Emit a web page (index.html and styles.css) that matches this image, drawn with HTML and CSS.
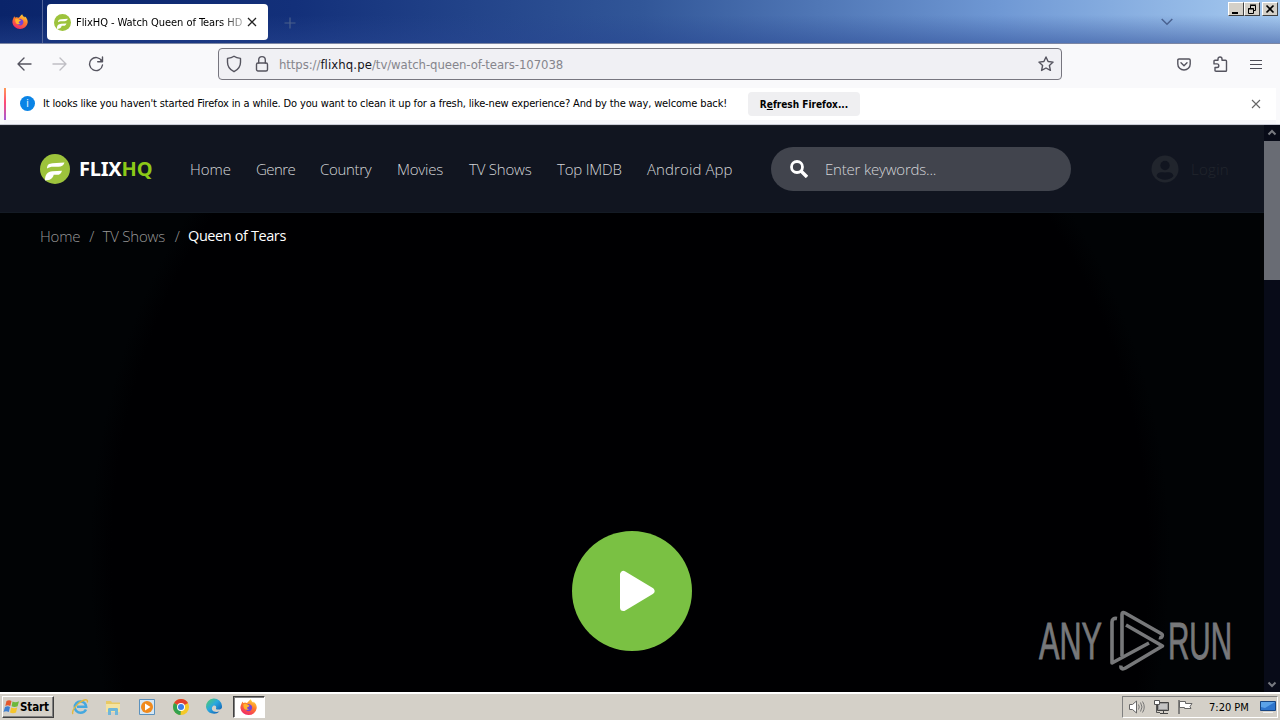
FILE: index.html
```html
<!DOCTYPE html>
<html lang="en">
<head>
<meta charset="utf-8">
<title>FlixHQ - Watch Queen of Tears HD</title>
<link rel="stylesheet" href="styles.css">
</head>
<body>
<svg width="0" height="0" class="defs">
  <defs>
    <linearGradient id="fire" x1="0.8" y1="0" x2="0.3" y2="1"><stop offset="0" stop-color="#ffe03a"/><stop offset=".45" stop-color="#ff7a2a"/><stop offset="1" stop-color="#f0266a"/></linearGradient>
    <linearGradient id="edgeg" x1="0" y1="0" x2="1" y2="1"><stop offset="0" stop-color="#56d05a"/><stop offset=".45" stop-color="#2aa8e0"/><stop offset="1" stop-color="#0b4fa8"/></linearGradient>
    <symbol id="firefox" viewBox="0 0 16 16">
      <path fill="url(#fire)" d="M10.2.3c.3 1.6 1.4 2.2 2.3 3.2.3-.4.2-.8.1-1.2C14.900 4 16 6.200 15.700 8.800A7.700 7.200 0 0 1 .4 8.500C.3 6.200 1.300 4.600 2.300 2.300l.8 1.500C4.500 2.900 5.500 3.300 6.500 3.800 7.800 3.400 8.300 1.300 10.200.3z"/>
      <path fill="#7343d8" d="M8 4.800c2.200.2 3.500 1.700 3.400 3.500S10 11.500 8.200 11.500 4.900 10.200 4.800 8.400c0-.5.1-1 .3-1.400l2.300.3C8.800 6.500 7.500 5.900 7 5.600c.2-.4.600-.7 1-.8z"/>
      <path fill="#ffb52c" d="M3.200 5.200c1.700-.8 3.200-.3 3.800.5 1.200.1 2 .3 1.800.8-.4.700-1.700.6-2 1.400-.3 1 .6 1.700 1.900 1.700-2 1.300-4.700.5-5.200-1.700-.2-1-.5-1.800-.3-2.700z"/>
    </symbol>
    <symbol id="flix" viewBox="0 0 30 30">
      <circle cx="15" cy="15" r="15" fill="#9dc33c"/>
      <path fill="#fff" d="M7 14.500C7 11 9 9.500 12.500 9.300L24.500 8.500C23.500 11.500 21.500 12.700 18.500 12.700h-5c-3 0-4.500.600-6.500 1.800zM5 26.500c0-6 2.500-9 7.500-9.200l9.500-.600c-1 3-2.500 4.100-5 4.100h-3.300c-1 4-3.700 5.700-8.700 5.700z"/>
    </symbol>
  </defs>
</svg>
<div class="screen">
  <header class="titlebar">
    <div class="ff-button"><svg width="16" height="16"><use href="#firefox"/></svg></div>
    <div class="tab">
      <svg width="17" height="17" viewBox="0 0 30 30"><use href="#flix"/></svg>
      <span class="tab-title">FlixHQ - Watch Queen of Tears HD</span>
      <svg class="tab-close" width="10" height="10" viewBox="0 0 10 10"><path d="M1 1l8 8M9 1L1 9" stroke="#222" stroke-width="1.3"/></svg>
    </div>
    <svg class="new-tab" width="12" height="12" viewBox="0 0 12 12"><path d="M6 .5v11M.5 6h11" stroke="#4a608c" stroke-width="1.2"/></svg>
    <svg class="all-tabs" width="12" height="8" viewBox="0 0 12 8"><path d="M.7 1L6 6.300 11.300 1" fill="none" stroke="#4a6290" stroke-width="1.500"/></svg>
    <div class="window-buttons">
      <span class="wb"><svg width="14" height="12"><path d="M3 9h6v2H3z"/></svg></span>
      <span class="wb"><svg width="14" height="12" fill="none" stroke="#000"><path d="M5.500 5V2.500h5v5H9M5 2h6M3.500 5.500h5v5h-5zM3 6h6"/></svg></span>
      <span class="wb wb-close"><svg width="14" height="12"><path d="M3.500 2.500l7 7M10.500 2.500l-7 7" stroke="#000" stroke-width="1.700"/></svg></span>
    </div>
  </header>

  <div class="toolbar">
    <svg class="nav-back" width="16" height="16" viewBox="0 0 16 16"><path d="M15 8H2M8 2L2 8l6 6" class="ln"/></svg>
    <svg class="nav-fwd" width="16" height="16" viewBox="0 0 16 16"><path d="M1 8h13M8 2l6 6-6 6" class="ln"/></svg>
    <svg class="nav-reload" width="16" height="16" viewBox="0 0 16 16"><path d="M13.800 5A6.500 6.500 0 1 0 14.500 9M14.500 1v4.800H9.700" class="ln"/><path d="M14.800 2v4h-4z" fill="#55545f"/></svg>
    <div class="urlbar">
      <svg class="u-shield" width="16" height="18" viewBox="0 0 16 18"><path class="ln" d="M8 1.300c2 1.500 4.300 1.900 6.500 2.100v3.800c0 4-2.500 7.500-6.500 9.500-4-2-6.500-5.500-6.500-9.500V3.400C3.700 3.200 6 2.800 8 1.300z"/></svg>
      <svg class="u-lock" width="14" height="18" viewBox="0 0 14 18"><rect class="ln" x="1.500" y="8" width="11" height="8" rx="1.500"/><path class="ln" d="M3.700 8V5c0-4.500 6.600-4.500 6.600 0v3"/></svg>
      <span class="url">https://<b>flixhq.pe</b>/tv/watch-queen-of-tears-107038</span>
      <svg class="u-star" width="16" height="16" viewBox="0 0 16 16"><path class="ln" d="M8 1l2.100 4.500 5 .6-3.700 3.400 1 4.900L8 12l-4.400 2.400 1-4.900L.9 6.100l5-.6z"/></svg>
    </div>
    <svg class="t-pocket" width="14" height="13" viewBox="0 0 14 13"><path class="ln" d="M2 1h10c.700 0 1.200.500 1.200 1.200V6c0 3.500-2.800 6-6.200 6S.8 9.500.8 6V2.200C.8 1.500 1.300 1 2 1zM4 4.800l3 3 3-3"/></svg>
    <svg class="t-ext" width="15" height="16" viewBox="0 0 15 16"><path class="ln" d="M5 4.300V3a2 2 0 0 1 4 0v1.300h3.600c.6 0 .9.300.9.900v9.300c0 .5-.3.800-.8.800H3c-.6 0-1-.3-1-.9V11.500h2a1.800 1.800 0 0 0 0-3.600H1V5.200c0-.6.300-.9.900-.9z"/></svg>
    <svg class="t-menu" width="12" height="11" viewBox="0 0 12 11"><path d="M0 1.500h12M0 5.500h12M0 9.500h12" stroke="#4d4d57" stroke-width="1.200"/></svg>
  </div>

  <div class="notice">
    <span class="info">i</span>
    <span class="notice-text">It looks like you haven't started Firefox in a while. Do you want to clean it up for a fresh, like-new experience? And by the way, welcome back!</span>
    <span class="refresh">R<u>e</u>fresh Firefox...</span>
    <svg class="notice-close" width="10" height="10" viewBox="0 0 10 10"><path d="M1 1l8 8M9 1L1 9" stroke="#666" stroke-width="1.100"/></svg>
  </div>

  <main class="viewport">
    <div class="page">
      <div class="site-header">
        <svg class="logo" width="30" height="30" viewBox="0 0 30 30"><use href="#flix"/></svg>
        <span class="brand">FLIX<em>HQ</em></span>
        <nav class="menu">
          <a class="m1">Home</a><a class="m2">Genre</a><a class="m3">Country</a><a class="m4">Movies</a><a class="m5">TV Shows</a><a class="m6">Top IMDB</a><a class="m7">Android App</a>
        </nav>
        <div class="search">
          <svg width="18" height="18" viewBox="0 0 18 18" fill="none" stroke="#fff"><circle cx="7" cy="7" r="5.500" stroke-width="2.800"/><path d="M11 11l6 6" stroke-width="3.400"/></svg>
          <span>Enter keywords...</span>
        </div>
        <div class="login">
          <svg width="28" height="28" viewBox="0 0 28 28"><circle cx="14" cy="14" r="13.500" fill="#21252d"/><circle cx="14" cy="10.500" r="4.700" fill="#111520"/><path d="M5.500 21c1.500-5 5-3.500 8.500-3.500s7-1.500 8.500 3.500c-4 5-13 5-17 0z" fill="#111520"/></svg>
          <span>Login</span>
        </div>
      </div>
      <div class="hero">
        <div class="crumbs"><span class="c1">Home</span><span class="sep">/</span><span class="c2">TV Shows</span><span class="sep">/</span><span class="c3">Queen of Tears</span></div>
        <div class="play"><svg width="38" height="42" viewBox="0 0 38 42"><path d="M4.500 4.500v33L32 21z" fill="#fff" stroke="#fff" stroke-width="7" stroke-linejoin="round"/></svg></div>
      </div>
    </div>
    <div class="scrollbar">
      <svg width="16" height="16"><path d="M4.500 9.500L8 6l3.500 3.500" fill="none" stroke="#777a80" stroke-width="2"/></svg>
      <div class="thumb"></div>
      <svg class="down" width="16" height="16"><path d="M4.500 6.500L8 10l3.500-3.500" fill="none" stroke="#777a80" stroke-width="2"/></svg>
    </div>
    <div class="watermark">
      <svg width="226" height="64" viewBox="0 0 226 64">
        <g class="wm-text"><text transform="translate(2 49.500) scale(.6 1)">ANY</text><text transform="translate(131 49.500) scale(.58 1)">RUN</text></g>
        <g fill="none" stroke="#77787a" stroke-width="3.600" stroke-linejoin="round">
          <path d="M80 9.500c-3-.5-5 .5-5 3.500v41l37-20"/>
          <path d="M85 47V5.500c0-2 1-2.500 3-1.500l36 20.500c2.500 1.500 1 5-2 4"/>
          <path d="M89 16l36.500 21-37 22c-3 1.700-5 1-4.500-2.500"/>
        </g>
      </svg>
    </div>
  </main>

  <footer class="taskbar">
    <div class="start">
      <svg width="17" height="16" viewBox="0 0 17 16"><path fill="#e4572b" d="M3.500 2C5.500.8 7 1 8.500 2L7.300 7C5.500 6 4 6 2.300 7z"/><path fill="#6db83c" d="M9.500 2.500c2 1 4 1 6.500-.3L14.600 7.200c-2 1-4 1-6 .1z"/><path fill="#3f7fd0" d="M2 8c2-1 3.500-1 5 0l-1.200 5c-2-1-3.500-1-5.300 0z"/><path fill="#f5c52d" d="M8.200 8.500c2 1 4 1 6 0L13 13.500c-2 1-4 1-6 0z"/></svg>
      <span>Start</span>
    </div>
    <div class="quick">
      <svg width="18" height="18" viewBox="0 0 18 18"><path d="M15 11.500c-1 2-3 3.300-5.500 3.300a5.700 5.700 0 1 1 5.700-6H6" fill="none" stroke="#45a8df" stroke-width="2.500"/><path d="M2 16C0 13 6 5 12 2.500c4-1.600 5-.3 4.200 2" fill="none" stroke="#e3b93f" stroke-width="1.400"/></svg>
      <svg width="18" height="18" viewBox="0 0 18 18"><path d="M2 3h5l1 1.500h8V14H2z" fill="#e8c965"/><path d="M2 6h14v8H2z" fill="#f4e3a0"/><path d="M4 17V11.500c0-1 .5-1.500 1.500-1.500h7c1 0 1.500.5 1.500 1.500V17h-3v-4H7v4z" fill="#6fb7d9"/></svg>
      <svg width="18" height="18" viewBox="0 0 18 18"><path d="M1.500 1.500h15v15h-15z" fill="#d5e7f5" stroke="#5b91bd"/><circle cx="9" cy="9" r="6" fill="#f08a1d"/><path d="M7 5.500v7L12.500 9z" fill="#fff"/></svg>
      <svg width="18" height="18" viewBox="0 0 18 18"><circle cx="9" cy="9" r="8" fill="#f5c928"/><path d="M9 9L2.100 5A8 8 0 0 1 16 5z" fill="#e2402f"/><path d="M9 9L2.100 5A8 8 0 0 0 8.500 17z" fill="#33a14f"/><circle cx="9" cy="9" r="4" fill="#fff"/><circle cx="9" cy="9" r="3" fill="#3c7fe8"/></svg>
      <svg width="18" height="18" viewBox="0 0 18 18"><path d="M1 9a8 8 0 0 1 16-1c.5 3-2 4-5 3.500-1.500-.3-1-1-.8-2C11.500 7 8 6.500 7 9.500c-.8 3 2 5.500 7.500 4A8 8 0 0 1 1 9z" fill="url(#edgeg)"/></svg>
      <div class="active-task"><svg width="17" height="17" viewBox="0 0 16 16"><use href="#firefox"/></svg></div>
    </div>
    <div class="tray">
      <svg width="18" height="16" viewBox="0 0 18 16"><path d="M1.500 5.500h3L8.500 2v12l-4-3.500h-3z" fill="#fff" stroke="#666"/><path d="M10.500 5.500q1.500 2.500 0 5M12.500 3.500q3 4.500 0 9M14.500 2.500q3.500 5.500 0 11" fill="none" stroke="#777"/></svg>
      <svg width="17" height="16" viewBox="0 0 17 16"><path d="M4.500 3.500h11v8h-11z" fill="#999" stroke="#444"/><path d="M6 5h8v5H6z" fill="#c4c4c4"/><path d="M7 14.500h8M10.500 12v2" stroke="#444"/><path d="M1.500 1.500h5v4h-5z" fill="#fff" stroke="#555"/><path d="M3.500 6v7.500H7" fill="none" stroke="#555"/></svg>
      <svg width="17" height="16" viewBox="0 0 17 16"><path d="M2.500 2.500h6v2h6.500l-2 3 1 2H7.500v-1h-5z" fill="#fff" stroke="#666"/><path d="M2 1v14" stroke="#666" stroke-width="1.500"/></svg>
      <span class="clock">7:20 PM</span>
      <svg class="desk" width="16" height="14" viewBox="0 0 16 14"><path d="M.5 1.500h15v9H.5z" fill="#2f75cc" stroke="#174582"/><path d="M1 2h14L5 8 1 7z" fill="#5ba2e8"/><path d="M3 12.500h10" stroke="#f0f0f0"/></svg>
    </div>
  </footer>
</div>
</body>
</html>
```
FILE: styles.css
```css
* { box-sizing: border-box; }
body { margin: 0; background: #000; overflow: hidden; }
svg { display: block; flex: none; }
.defs { position: absolute; }
.screen { width: 1280px; height: 720px; display: flex; flex-direction: column; font-family: "DejaVu Sans Condensed", "DejaVu Sans", sans-serif; font-stretch: condensed; font-size: 11px; white-space: nowrap; }
.ln { fill: none; stroke: #55545f; stroke-width: 1.4; stroke-linejoin: round; stroke-linecap: round; }

.titlebar { height: 44px; flex: none; display: flex; align-items: flex-start; border-bottom: 1px solid #7c86a3; background: linear-gradient(180deg, rgba(30,60,130,0) 35%, rgba(40,70,145,.5) 100%), linear-gradient(90deg, #0a246a 0, #13307a 23%, #315698 50%, #6f98d4 78%, #a6caf0 100%); }
.ff-button { width: 43px; height: 43px; padding: 14px 0 0 12px; border-right: 1px solid #53659a; }
.tab { width: 221px; height: 36px; margin: 4px 0 0 4px; padding: 0 10px 0 7px; display: flex; align-items: center; background: #fff; border-radius: 4px; }
.tab-title { width: 166px; margin: 1px 0 0 5px; overflow: hidden; letter-spacing: -.06px; color: #000; -webkit-mask-image: linear-gradient(90deg, #000 145px, transparent 176px); }
.tab-close { margin-left: 5px; }
.new-tab { margin: 17px 0 0 16px; }
.all-tabs { margin: 18px 0 0 865px; }
.window-buttons { display: flex; margin: 2px 0 0 55px; }
.wb { width: 16px; height: 14px; background: #d4d0c8; border: 1px solid; border-color: #fff #404040 #404040 #fff; overflow: hidden; }
.wb-close { margin-left: 2px; }

.toolbar { height: 44px; flex: none; display: flex; align-items: center; background: #f9f9fb; padding: 0 18px 4px 16px; }
.nav-fwd { margin-left: 20px; opacity: .35; }
.nav-reload { margin-left: 20px; }
.urlbar { width: 844px; height: 32px; margin-left: 114px; display: flex; align-items: center; padding: 0 7px; border: 1px solid #77767f; border-radius: 4px; background: #f0f0f4; }
.u-lock { margin-left: 13px; }
.url { flex: 1; margin-left: 10px; font-size: 13px; letter-spacing: -.07px; color: #85858c; }
.url b { font-weight: 400; letter-spacing: .1px; color: #15141a; }
.t-pocket { margin-left: 115px; }
.t-ext { margin-left: 22px; }
.t-menu { margin-left: 22px; }

.notice { height: 37px; flex: none; display: flex; align-items: center; padding: 0 19px 5px 14px; border-bottom: 1px solid #c8cad6; background: linear-gradient(#ff9a56, #ff4a74 45%, #a35bd8) 4px 0 / 2px 32px no-repeat, linear-gradient(#f9f9fb,#f9f9fb) 0 0 / 4px 100% no-repeat, linear-gradient(#f9f9fb,#f9f9fb) 100% 0 / 4px 100% no-repeat, linear-gradient(#f4f4f8,#f6f6fa) 0 100% / 100% 4px no-repeat, #fff; }
.info { width: 15px; height: 15px; margin-left: 6px; border-radius: 50%; background: #0a84e6; color: #fff; text-align: center; font-size: 10px; line-height: 15px; }
.notice-text { width: 697px; margin-left: 8px; color: #000; letter-spacing: -.145px; }
.refresh { width: 112px; height: 24px; margin-left: 8px; border-radius: 4px; background: #efeff1; color: #000; font-weight: 700; font-size: 10px; line-height: 25px; text-align: center; }
.notice-close { margin-left: auto; }

.viewport { position: relative; flex: 1; min-height: 0; display: flex; }
.page { width: 1264px; display: flex; flex-direction: column; font-family: "Open Sans", "Noto Sans", sans-serif; font-stretch: normal; font-weight: 300; font-size: 15px; }
.site-header { height: 88px; flex: none; display: flex; align-items: center; padding-left: 40px; background: #111520; border-top: 1px solid #1c1f27; border-bottom: 1px solid #141b25; color: #d4d5d8; }
.brand { width: 111px; margin: -1px 0 0 9px; font-family: "Noto Sans", sans-serif; font-weight: 700; font-size: 20px; letter-spacing: -.2px; color: #fff; }
.brand em { font-style: normal; color: #8cc818; }
.menu { display: flex; gap: 25px; }
.m1 { width: 41px; } .m2 { width: 39px; } .m3 { width: 52px; } .m4 { width: 47px; } .m5 { width: 63px; } .m6 { width: 65px; } .m7 { width: 86px; }
.menu a, .crumbs, .search { letter-spacing: -.2px; }
.menu .m1 { letter-spacing: 0; }
.menu .m2 { letter-spacing: -.6px; }
.menu .m3 { letter-spacing: -.3px; }
.menu .m7 { letter-spacing: .1px; }
.search { width: 300px; height: 44px; margin-left: 38px; padding-left: 19px; display: flex; align-items: center; gap: 17px; border-radius: 22px; background: #41444d; }
.login { margin-left: 80px; display: flex; align-items: center; gap: 12px; letter-spacing: .3px; color: #21252d; }
.hero { flex: 1; display: flex; flex-direction: column; align-items: center; background: radial-gradient(ellipse 540px 600px at 630px 345px, #000002 96%, #010305 100%); }
.crumbs { align-self: stretch; display: flex; padding: 13px 0 0 40px; color: #999; }
.c1 { width: 41px; } .c2 { width: 64px; } .sep { width: 21.5px; text-align: center; } .c3 { color: #fff; font-weight: 400; font-size: 14.5px; letter-spacing: -.4px; }
.play { width: 120px; height: 120px; margin-top: 285px; padding: 39px 0 0 47px; border-radius: 50%; background: #7ac143; }
.scrollbar { width: 16px; background: #080b18; display: flex; flex-direction: column; }
.thumb { height: 139px; background: #696c74; }
.down { margin-top: auto; }
.watermark { position: absolute; left: 1037px; top: 484px; }
.wm-text { font: 400 51px "Liberation Sans", sans-serif; fill: #77787a; stroke: #77787a; stroke-width: .9px; }

.taskbar { height: 28px; flex: none; display: flex; align-items: center; padding: 1px 2px 0; background: #d4d0c8; border-top: 1px solid #fff; box-shadow: inset 0 1px #fff; }
.start { width: 52px; height: 22px; display: flex; align-items: center; border: 1px solid; border-color: #fff #404040 #404040 #fff; box-shadow: inset -1px -1px #808080; font-weight: 700; font-size: 11.5px; letter-spacing: -.1px; }
.quick { display: flex; align-items: center; gap: 15.700px; margin-left: 16.5px; }
.active-task { width: 32px; height: 22px; margin-left: -6px; display: flex; align-items: center; justify-content: center; background: #fff; border: 1px solid; border-color: #404040 #fff #fff #404040; box-shadow: inset 1px 1px #808080; }
.tray { width: 156px; height: 22px; margin-left: auto; padding-left: 5px; display: flex; align-items: center; gap: 7px; border: 1px solid; border-color: #808080 #fff #fff #808080; }
.clock { width: 43px; margin-left: 8px; letter-spacing: 0; }
.desk { margin-left: 1px; }
```
